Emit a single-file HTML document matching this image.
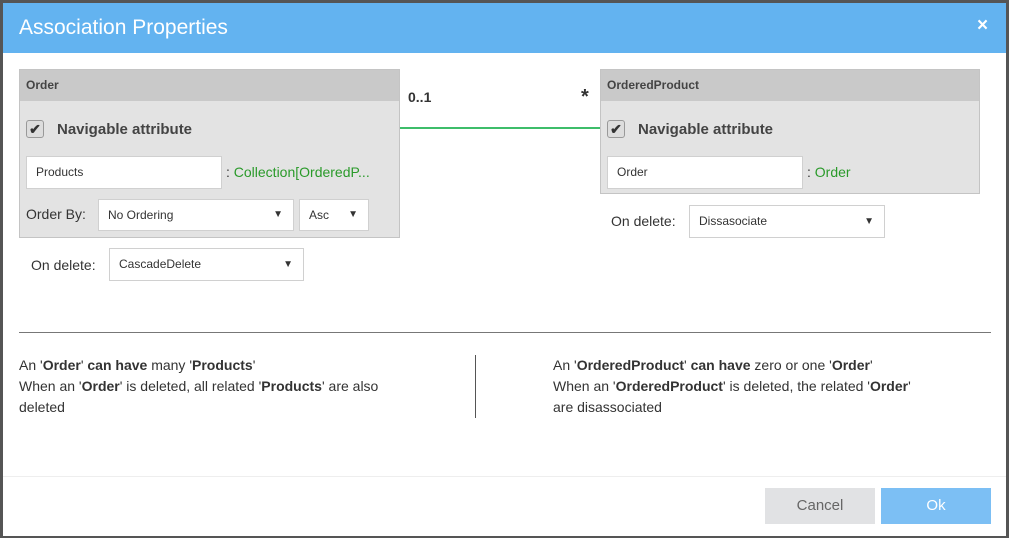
<!DOCTYPE html><html><head><style>
body{margin:0;width:1009px;height:538px;background:#555;position:relative;overflow:hidden;font-family:"Liberation Sans",sans-serif;color:#333}
.a{position:absolute}
.dlg{left:3px;top:3px;width:1003px;height:533px;background:#fff}
.hdr{left:3px;top:3px;width:1003px;height:50px;background:#63b3f0;color:#fff;font-size:21px}
.box{background:#e3e3e3;border:1px solid #c4c4c4}
.bh{background:#c9c9c9;font-weight:bold;font-size:12px;height:31px;line-height:31px;padding-left:6px;color:#444}
.inp{background:#fff;border:1px solid #d0d0d0;font-size:12px;box-sizing:border-box;padding-left:9px;color:#333}
.sel::after{content:"▼";position:absolute;right:10px;top:0;font-size:10px}
.chk{width:16px;height:16px;border:1px solid #999;border-radius:3px;background:#ddd;font-size:14px;line-height:16px;text-align:center;font-weight:bold}
.nav{font-weight:bold;font-size:15px;color:#444}
.g{color:#2a9a2a;font-size:14px}
.t{font-size:14px;line-height:21px}
</style></head><body>
<div class="a dlg"></div>
<div class="a hdr"><span class="a" style="left:16px;top:13px">Association Properties</span><span class="a" style="left:974px;top:12px;font-weight:bold;font-size:19px">×</span></div>

<div class="a box" style="left:19px;top:69px;width:379px;height:167px">
<div class="bh">Order</div>
<div class="a chk" style="left:6px;top:50px">✔</div>
<span class="a nav" style="left:37px;top:51px">Navigable attribute</span>
<div class="a inp" style="left:6px;top:86px;width:196px;height:33px;line-height:31px">Products</div>
<span class="a g" style="left:206px;top:94px"><span style="color:#333">:</span> Collection[OrderedP...</span>
<span class="a" style="left:6px;top:136px;font-size:14px">Order By:</span>
<div class="a inp sel" style="left:78px;top:129px;width:196px;height:32px;line-height:30px">No Ordering</div>
<div class="a inp sel" style="left:279px;top:129px;width:70px;height:32px;line-height:30px">Asc</div>
</div>
<span class="a" style="left:31px;top:257px;font-size:14px">On delete:</span>
<div class="a inp sel" style="left:109px;top:248px;width:195px;height:33px;line-height:31px">CascadeDelete</div>

<span class="a" style="left:408px;top:89px;font-weight:bold;font-size:14px">0..1</span>
<span class="a" style="left:581px;top:86px;font-weight:bold;font-size:20px">*</span>
<div class="a" style="left:400px;top:127px;width:200px;height:2px;background:#3dbd6a"></div>

<div class="a box" style="left:600px;top:69px;width:378px;height:123px">
<div class="bh">OrderedProduct</div>
<div class="a chk" style="left:6px;top:50px">✔</div>
<span class="a nav" style="left:37px;top:51px">Navigable attribute</span>
<div class="a inp" style="left:6px;top:86px;width:196px;height:33px;line-height:31px">Order</div>
<span class="a g" style="left:206px;top:94px"><span style="color:#333">:</span> Order</span>
</div>
<span class="a" style="left:611px;top:213px;font-size:14px">On delete:</span>
<div class="a inp sel" style="left:689px;top:205px;width:196px;height:33px;line-height:31px">Dissasociate</div>

<div class="a" style="left:19px;top:332px;width:972px;height:1px;background:#777"></div>
<div class="a t" style="left:19px;top:355px;width:400px">An '<b>Order</b>' <b>can have</b> many '<b>Products</b>'<br>When an '<b>Order</b>' is deleted, all related '<b>Products</b>' are also deleted</div>
<div class="a" style="left:475px;top:355px;width:1px;height:63px;background:#555"></div>
<div class="a t" style="left:553px;top:355px;width:440px">An '<b>OrderedProduct</b>' <b>can have</b> zero or one '<b>Order</b>'<br>When an '<b>OrderedProduct</b>' is deleted, the related '<b>Order</b>'<br>are disassociated</div>
<div class="a" style="left:3px;top:476px;width:1003px;height:1px;background:#eee"></div>
<div class="a" style="left:765px;top:488px;width:110px;height:36px;background:#e1e2e4;color:#666;font-size:15px;text-align:center;line-height:36px">Cancel</div>
<div class="a" style="left:881px;top:488px;width:110px;height:36px;background:#7cbff4;color:#fff;font-size:15px;text-align:center;line-height:36px">Ok</div>
</body></html>
